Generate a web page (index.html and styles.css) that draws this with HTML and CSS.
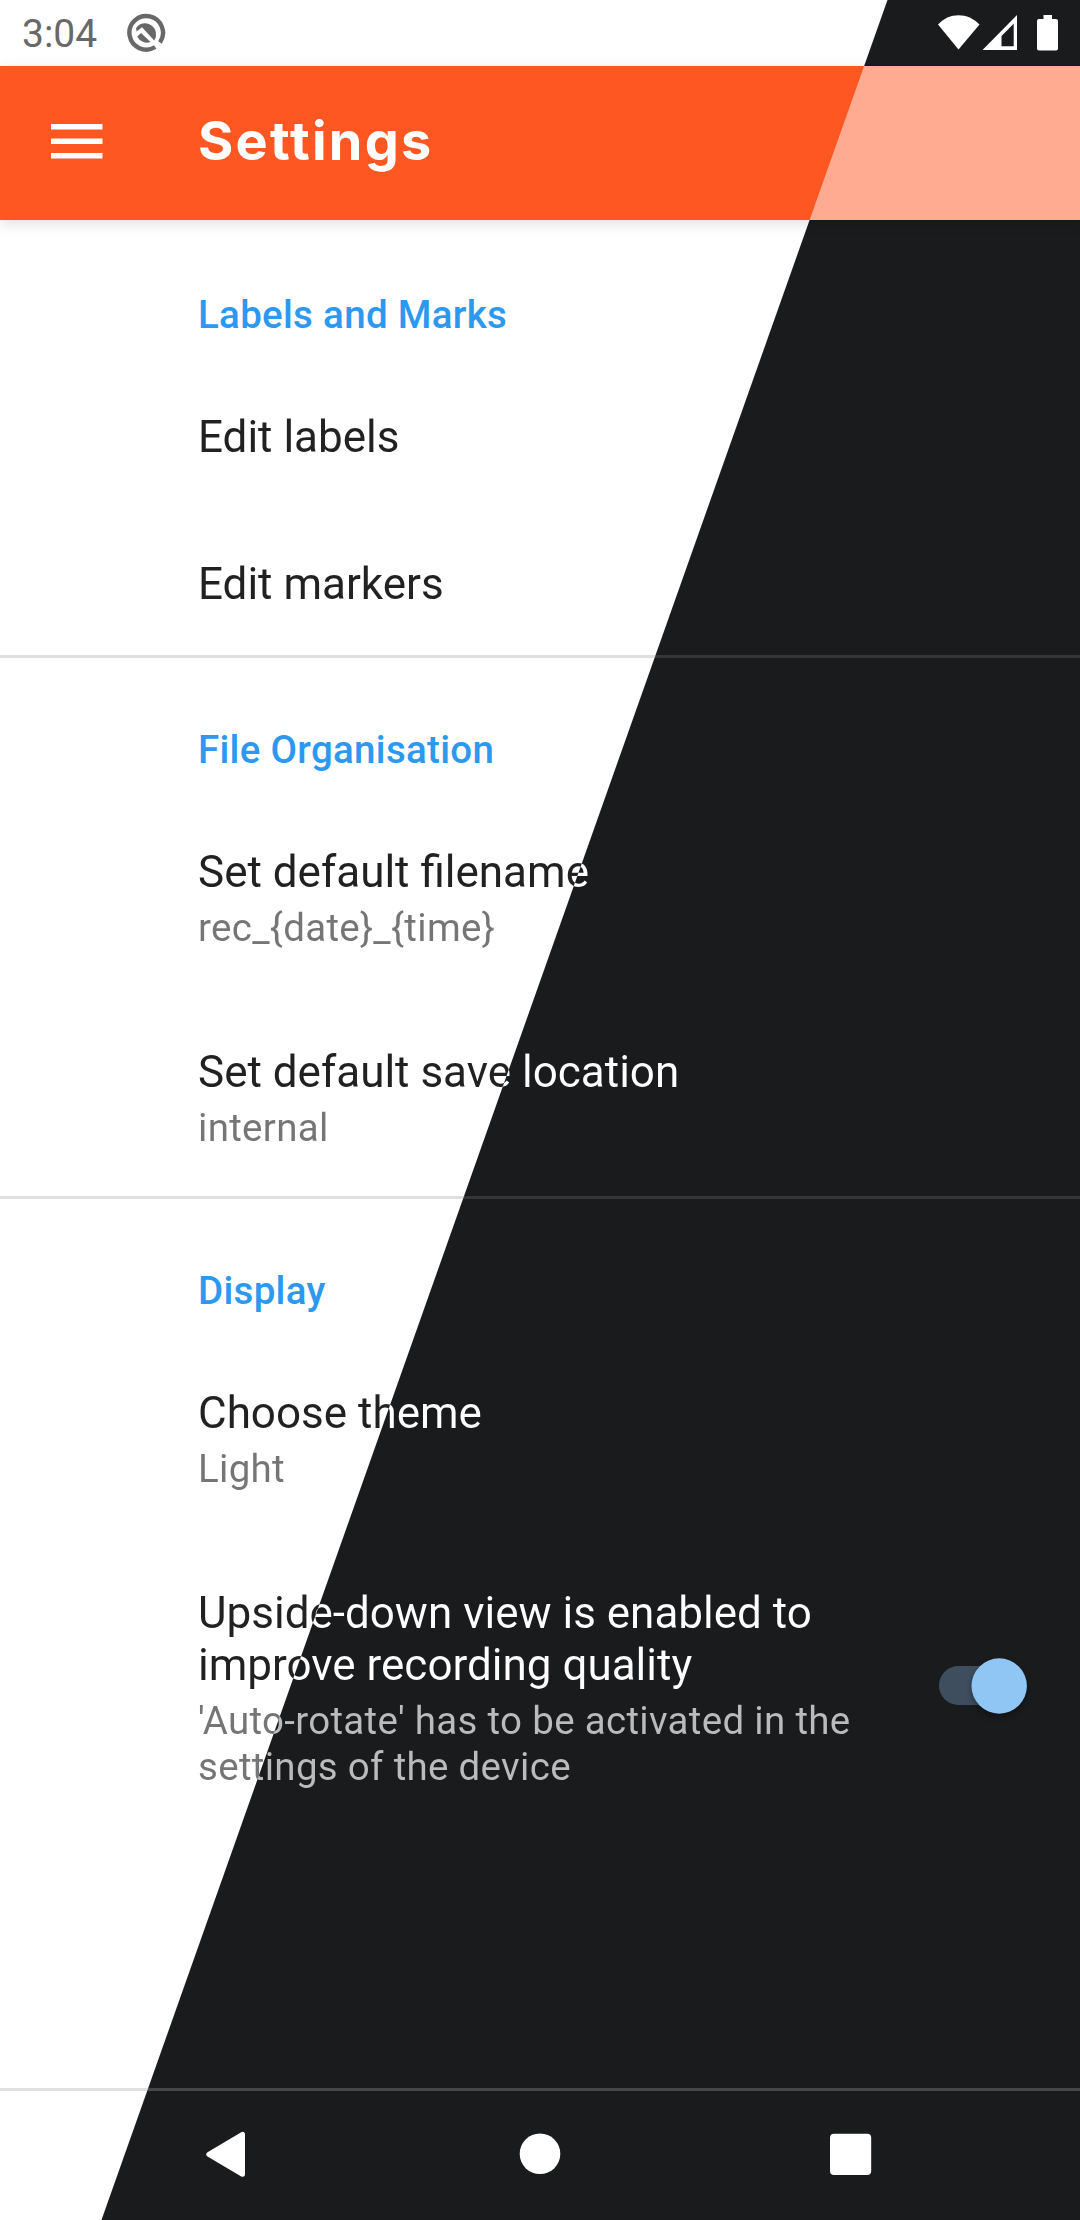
FILE: index.html
```html
<!DOCTYPE html>
<html lang="en">
<head>
<meta charset="utf-8">
<title>Settings</title>
<link rel="stylesheet" href="styles.css">
</head>
<body>
<div class="screen">
  <div class="status-bar">
    <span class="clock">3:04</span>
    <svg class="notification" width="40" height="40" viewBox="0 0 40 40">
      <path d="M29.2 34A16.8 16.8 0 1 1 34 29.4" fill="none" stroke="#686868" stroke-width="4.4"/>
      <path d="M10 15.2A10.8 10.8 0 0 1 28.2 27.4L16 14.2l-5.400 4.300z" fill="#686868"/>
      <path d="M11.2 23.500l3.900-3.600 9.400 9.100a10.800 10.800 0 0 1-13.300-5.500z" fill="#686868"/>
    </svg>
    <svg class="system-icons" width="122" height="38" viewBox="0 0 122 38">
      <path d="M0 10.500C11-2 30-2 41.500 10.500L20.500 35.500z" fill="#fff"/>
      <path fill-rule="evenodd" d="M44.500 36L79 1V36zM63.500 22V32.300H75.700V9.800z" fill="#fff"/>
      <path d="M105.500 1h8.500v4h4a2 2 0 0 1 2 2v27.500a2 2 0 0 1-2 2h-17a2 2 0 0 1-2-2V7a2 2 0 0 1 2-2h4.500z" fill="#fff"/>
    </svg>
  </div>

  <header class="app-bar">
    <svg class="menu" width="52" height="36" viewBox="0 0 52 36">
      <path d="M0 0h51.500v5.500H0zM0 14.500h51.500V20H0zM0 29h51.500v5.500H0z" fill="#fff"/>
    </svg>
    <h1 class="app-title">Settings</h1>
  </header>

  <main class="settings">
    <section class="group">
      <h2 class="category">Labels and Marks</h2>
      <div class="row"><div class="row-text"><div class="title">Edit labels</div></div></div>
      <div class="row"><div class="row-text"><div class="title">Edit markers</div></div></div>
    </section>
    <section class="group">
      <h2 class="category">File Organisation</h2>
      <div class="row"><div class="row-text">
        <div class="title">Set default filename</div>
        <div class="summary">rec_{date}_{time}</div>
      </div></div>
      <div class="row"><div class="row-text">
        <div class="title">Set default save location</div>
        <div class="summary">internal</div>
      </div></div>
    </section>
    <section class="group">
      <h2 class="category">Display</h2>
      <div class="row"><div class="row-text">
        <div class="title">Choose theme</div>
        <div class="summary">Light</div>
      </div></div>
      <div class="row">
        <div class="row-text">
          <div class="title">Upside-down view is enabled to improve recording quality</div>
          <div class="summary">'Auto-rotate' has to be activated in the settings of the device</div>
        </div>
        <svg class="switch" width="92" height="64" viewBox="0 0 92 64">
          <rect x="0" y="12" width="83" height="39" rx="19.500" fill="#3e4e5e"/>
          <circle class="thumb" cx="60.200" cy="32" r="27.700" fill="#90c6f4"/>
        </svg>
      </div>
    </section>
  </main>

  <nav class="nav-bar">
    <svg width="56" height="56" viewBox="0 0 56 56"><path d="M6.800 28.300L40.500 8.300V48.300z" fill="#fff" stroke="#fff" stroke-width="5" stroke-linejoin="round"/></svg>
    <svg width="56" height="56" viewBox="0 0 56 56"><circle cx="28" cy="27.800" r="20.300" fill="#fff"/></svg>
    <svg width="56" height="56" viewBox="0 0 56 56"><rect x="8" y="7.800" width="41.200" height="41.200" rx="4" fill="#fff"/></svg>
  </nav>
</div>
</body>
</html>
```
FILE: styles.css
```css
/* Light theme on the left of the slanted edge, dark theme on the right */
:root {
  --angle: 109.497deg;
  --edge-a: 836.1px;
  --edge-b: 837.1px;
}

* { box-sizing: border-box; }

body {
  margin: 0;
  font-family: Roboto, sans-serif;
}

.screen,
.app-bar,
.group + .group::before,
.nav-bar::before,
.title,
.summary {
  background-image: linear-gradient(var(--angle), var(--light) var(--edge-a), var(--dark) var(--edge-b));
  background-attachment: fixed;
}

.screen {
  --light: #fff;
  --dark: #1a1b1d;
  display: flex;
  flex-direction: column;
  width: 1080px;
  height: 2220px;
  overflow: hidden;
}

.status-bar {
  display: flex;
  height: 66px;
  padding: 0 20px 0 22px;
}

.clock {
  width: 104px;
  padding-top: 11px;
  font-size: 39px;
  line-height: 46px;
  color: #686868;
}

.notification { margin-top: 13px; }

.system-icons { margin: 14px 0 0 auto; }

.app-bar {
  --light: #ff5722;
  --dark: #ffab91;
  display: flex;
  height: 154px;
  padding-left: 51px;
  box-shadow: 0 4px 14px rgba(0, 0, 0, .12);
}

.menu { margin-top: 58px; }

.app-title {
  margin: 43px 0 0 95px;
  font: 700 54px/64px Inter, sans-serif;
  letter-spacing: 2.200px;
  color: #fff;
}

.settings { flex: 1; }

.group {
  --light: #e0e0e0;
  --dark: #353638;
}

.group::before {
  content: "";
  display: block;
  height: 3px;
}

.category {
  margin: 0;
  padding: 69px 0 26px 198px;
  font-size: 38.5px;
  line-height: 46px;
  font-weight: 500;
  letter-spacing: .3px;
  color: #2c98f0;
}

.row {
  display: flex;
  padding: 47px 49px 48px 198px;
}

.row:last-child { padding-bottom: 45px; }

.row-text { width: 690px; }

.title,
.summary {
  -webkit-background-clip: text;
  background-clip: text;
  -webkit-text-fill-color: transparent;
}

.title {
  --light: #212121;
  --dark: #fff;
  font-size: 44px;
  line-height: 52px;
}

.summary {
  --light: #757575;
  --dark: #babbbb;
  margin-top: 7px;
  font-size: 38.5px;
  line-height: 46px;
  letter-spacing: .3px;
}

.switch {
  margin: 67px 0 0 auto;
  overflow: visible;
}

.thumb { filter: drop-shadow(0 3px 3px rgba(0, 0, 0, .35)); }

.nav-bar {
  --light: #e0e0e0;
  --dark: #464749;
  display: flex;
  flex-wrap: wrap;
  align-content: flex-start;
  justify-content: space-between;
  height: 132px;
  padding: 0 202px;
}

.nav-bar::before {
  content: "";
  flex: 0 0 1080px;
  height: 3px;
  margin: 0 -202px 35px;
}
```
